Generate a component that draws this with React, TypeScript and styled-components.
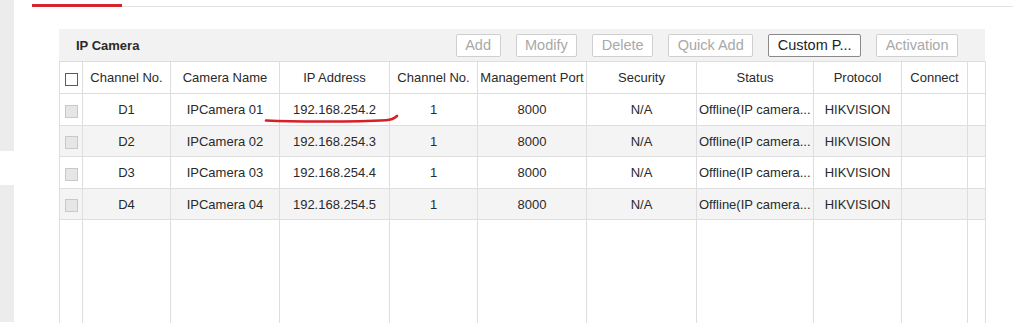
import React from "react";
import styled, { createGlobalStyle } from "styled-components";

const GlobalStyle = createGlobalStyle`
  html, body { margin: 0; padding: 0; background: #fff; }
  body { font-family: "Liberation Sans", Arial, sans-serif; color: #333; overflow: hidden; }
  * { box-sizing: border-box; }
`;

const Page = styled.div`
  display: flex;
  width: 1015px;
  height: 333px;
`;

const SideStrip = styled.div`
  width: 14px;
  display: flex;
  flex-direction: column;
  gap: 34px;
`;

const SideBlock = styled.div<{ $h: number }>`
  height: ${(p) => p.$h}px;
  background: #ececec;
`;

const Main = styled.div`
  flex: 1;
  padding: 0 2px 0 18px;
`;

const TabBar = styled.div`
  height: 7px;
  border-bottom: 1px solid #e2e2e2;
  display: flex;
  align-items: flex-end;
`;

const ActiveTab = styled.div`
  width: 90px;
  height: 3px;
  margin-bottom: -1px;
  background: #d3262d;
`;

const Panel = styled.div`
  position: relative;
  margin: 22px 0 0 27px;
  width: 926px;
`;

const PanelHeader = styled.div`
  height: 32px;
  background: #f2f2f2;
  display: flex;
  align-items: center;
  gap: 15px;
  padding: 0 27px 0 17px;
`;

const Title = styled.div`
  font-size: 13px;
  font-weight: bold;
  color: #2a2a2a;
  margin-right: auto;
`;

const Btn = styled.button<{ $active?: boolean }>`
  height: 23px;
  padding: 0 8.5px;
  border: 1px solid ${(p) => (p.$active ? "#8a8a8a" : "#cfcfcf")};
  border-radius: 2px;
  background: #fff;
  font-family: "Liberation Sans", Arial, sans-serif;
  font-size: 14.5px;
  color: ${(p) => (p.$active ? "#1e1e1e" : "#a8a8a8")};
  white-space: nowrap;
  cursor: default;
`;

const Table = styled.table`
  width: 926px;
  table-layout: fixed;
  border-collapse: collapse;
  font-size: 13px;
  color: #2a2a2a;
`;

const HeadCell = styled.th`
  height: 32px;
  border: 1px solid #dedede;
  font-weight: normal;
  text-align: center;
  padding: 0;
  white-space: nowrap;
  overflow: hidden;
`;

const Row = styled.tr<{ $alt: boolean }>`
  background: ${(p) => (p.$alt ? "#f4f4f4" : "#fff")};
  height: ${(p) => (p.$alt ? 31 : 32)}px;
`;

const Cell = styled.td<{ $left?: boolean }>`
  border: 1px solid #dedede;
  padding: ${(p) => (p.$left ? "0 0 0 2px" : "0")};
  text-align: ${(p) => (p.$left ? "left" : "center")};
  white-space: nowrap;
  overflow: hidden;
`;

const FillerCell = styled.td`
  height: 103px;
  border-left: 1px solid #dedede;
  border-right: 1px solid #dedede;
  border-top: 1px solid #dedede;
  border-bottom: none;
  padding: 0;
`;

const Check = styled.span<{ $disabled?: boolean }>`
  display: inline-block;
  width: 13px;
  height: 13px;
  margin-top: 3px;
  vertical-align: middle;
  border: 1px solid ${(p) => (p.$disabled ? "#c8c8c8" : "#5a5a5a")};
  background: ${(p) => (p.$disabled ? "#e6e6e6" : "#fff")};
`;

const Scribble = styled.svg`
  position: absolute;
  left: 206px;
  top: 84px;
  overflow: visible;
`;

const cols = [23, 88, 109, 110, 88, 109, 110, 117, 88, 66, 18];
const headers = [
  "Channel No.",
  "Camera Name",
  "IP Address",
  "Channel No.",
  "Management Port",
  "Security",
  "Status",
  "Protocol",
  "Connect",
];

const rows = [1, 2, 3, 4].map((i) => ({
  ch: `D${i}`,
  name: `IPCamera 0${i}`,
  ip: `192.168.254.${i + 1}`,
}));

export default function App() {
  return (
    <>
      <GlobalStyle />
      <Page>
        <SideStrip>
          <SideBlock $h={151} />
          <SideBlock $h={137} />
        </SideStrip>
        <Main>
          <TabBar>
            <ActiveTab />
          </TabBar>
          <Panel>
            <PanelHeader>
              <Title>IP Camera</Title>
              <Btn disabled>Add</Btn>
              <Btn disabled>Modify</Btn>
              <Btn disabled>Delete</Btn>
              <Btn disabled>Quick Add</Btn>
              <Btn $active>Custom P...</Btn>
              <Btn disabled>Activation</Btn>
            </PanelHeader>
            <Table>
              <colgroup>
                {cols.map((w, i) => (
                  <col key={i} style={{ width: w }} />
                ))}
              </colgroup>
              <thead>
                <tr>
                  <HeadCell>
                    <Check />
                  </HeadCell>
                  {headers.map((h, i) => (
                    <HeadCell key={i}>{h}</HeadCell>
                  ))}
                  <HeadCell />
                </tr>
              </thead>
              <tbody>
                {rows.map((r, i) => (
                  <Row key={r.ch} $alt={i % 2 === 1}>
                    <Cell>
                      <Check $disabled />
                    </Cell>
                    <Cell>{r.ch}</Cell>
                    <Cell>{r.name}</Cell>
                    <Cell>{r.ip}</Cell>
                    <Cell>1</Cell>
                    <Cell>8000</Cell>
                    <Cell>N/A</Cell>
                    <Cell $left>Offline(IP camera...</Cell>
                    <Cell>HIKVISION</Cell>
                    <Cell />
                    <Cell />
                  </Row>
                ))}
                <tr>
                  {cols.map((_, i) => (
                    <FillerCell key={i} />
                  ))}
                </tr>
              </tbody>
            </Table>
            <Scribble width="134" height="10" viewBox="0 0 134 10">
              <path
                d="M1 7.5 C 30 8.8, 90 8.8, 121 7.2 Q 128 6.8, 132 3"
                fill="none"
                stroke="#d61f27"
                strokeWidth="2.6"
                strokeLinecap="round"
              />
            </Scribble>
          </Panel>
        </Main>
      </Page>
    </>
  );
}
